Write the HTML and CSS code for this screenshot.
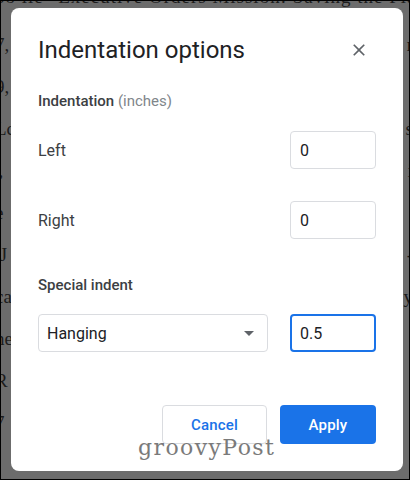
FILE: index.html
```html
<!DOCTYPE html>
<html>
<head>
<meta charset="utf-8">
<link rel="stylesheet" href="styles.css">
</head>
<body>
<div class="frame">
  <div class="doc">
    <p class="line l1"><span>oo lie "Executive Orders Mission: Saving the Planet." The</span></p>
    <p class="line"><span>7,</span><span>r</span></p>
    <p class="line"><span>9,</span><span></span></p>
    <p class="line"><span>Lc</span><span>s</span></p>
    <p class="line"><span>',</span><span>i</span></p>
    <p class="line"><span>e</span><span></span></p>
    <p class="line"><span>&nbsp;J</span><span>-</span></p>
    <p class="line"><span>ca</span><span>y</span></p>
    <p class="line"><span>ne</span><span></span></p>
    <p class="line"><span>R</span><span>.</span></p>
    <p class="line"><span>7</span><span></span></p>
  </div>
  <div class="dialog">
    <div class="header">
      <h1 class="title">Indentation options</h1>
      <svg class="close" viewBox="0 0 24 24" width="20" height="20"><path d="M19 6.41L17.59 5 12 10.59 6.41 5 5 6.41 10.59 12 5 17.59 6.41 19 12 13.41 17.59 19 19 17.59 13.41 12z" fill="#5f6368"/></svg>
    </div>
    <div class="section">Indentation <span class="muted">(inches)</span></div>
    <div class="row r-left">
      <span class="label">Left</span>
      <div class="input">0</div>
    </div>
    <div class="row r-right">
      <span class="label">Right</span>
      <div class="input">0</div>
    </div>
    <div class="section s-special">Special indent</div>
    <div class="row r-special">
      <div class="select"><span>Hanging</span><span class="caret"></span></div>
      <div class="input focused">0.5</div>
    </div>
    <div class="actions">
      <div class="btn cancel">Cancel</div>
      <div class="btn apply">Apply</div>
    </div>
  </div>
  <div class="watermark">groovyPost</div>
</div>
</body>
</html>
```

FILE: styles.css
```css
html, body {
  margin: 0;
  padding: 0;
}
.frame {
  width: 410px;
  height: 480px;
  box-sizing: border-box;
  border: 1px solid #000;
  background: #6c6c6c;
  position: relative;
  overflow: hidden;
}
.doc {
  font-family: "Liberation Serif", serif;
  font-size: 19px;
  color: #1c1c1c;
  white-space: nowrap;
}
.doc .line {
  margin: 0 -4px 0 -6px;
  height: 42px;
  line-height: 22px;
  display: flex;
  justify-content: space-between;
}
.doc .l1 {
  margin-top: -15px;
  letter-spacing: 1px;
  height: 48px;
}
.dialog {
  position: absolute;
  left: 10px;
  top: 7px;
  width: 392px;
  height: 463px;
  background: #fff;
  border-radius: 8px;
  box-sizing: border-box;
  padding: 28px 27px 0 27px;
  display: flex;
  flex-direction: column;
  font-family: Roboto, "Liberation Sans", sans-serif;
  color: #3c4043;
}
.header {
  display: flex;
  align-items: center;
  justify-content: space-between;
  height: 28px;
  padding-right: 7px;
}
.title {
  margin: 0;
  font-size: 24px;
  font-weight: 400;
  line-height: 28px;
  color: #202124;
}
.close {
  display: block;
}
.section {
  margin-top: 27px;
  line-height: 20px;
  font-size: 15px;
  font-weight: 500;
  color: #3c4043;
}
.muted {
  font-weight: 400;
  color: #80868b;
}
.s-special {
  margin-top: 36px;
}
.row {
  display: flex;
  align-items: center;
  justify-content: space-between;
  height: 38px;
}
.r-left { margin-top: 20px; }
.r-right { margin-top: 32px; }
.r-special { margin-top: 19px; }
.label {
  font-size: 16px;
  color: #3c4043;
}
.input {
  width: 86px;
  height: 38px;
  box-sizing: border-box;
  border: 1px solid #dadce0;
  border-radius: 4px;
  padding-left: 9px;
  display: flex;
  align-items: center;
  font-size: 16px;
  color: #202124;
}
.input.focused {
  border: 2px solid #1a73e8;
  padding-left: 8px;
}
.select {
  width: 230px;
  height: 38px;
  box-sizing: border-box;
  border: 1px solid #dadce0;
  border-radius: 4px;
  padding: 0 13px 0 8px;
  display: flex;
  align-items: center;
  justify-content: space-between;
  font-size: 16px;
  color: #202124;
}
.caret {
  width: 0;
  height: 0;
  border-left: 5px solid transparent;
  border-right: 5px solid transparent;
  border-top: 5px solid #5f6368;
}
.actions {
  margin-top: 53px;
  display: flex;
  justify-content: flex-end;
  gap: 13px;
}
.btn {
  height: 39px;
  box-sizing: border-box;
  border-radius: 4px;
  display: flex;
  align-items: center;
  justify-content: center;
  font-size: 15px;
  font-weight: 500;
  letter-spacing: 0.2px;
}
.cancel {
  width: 105px;
  border: 1px solid #dadce0;
  color: #1a73e8;
  background: #fff;
}
.apply {
  width: 96px;
  background: #1a73e8;
  color: #fff;
}
.watermark {
  position: absolute;
  left: 137px;
  top: 432px;
  font-family: "DejaVu Serif", serif;
  font-size: 22px;
  letter-spacing: 1.4px;
  color: #7a7a7a;
  line-height: 30px;
}
```
